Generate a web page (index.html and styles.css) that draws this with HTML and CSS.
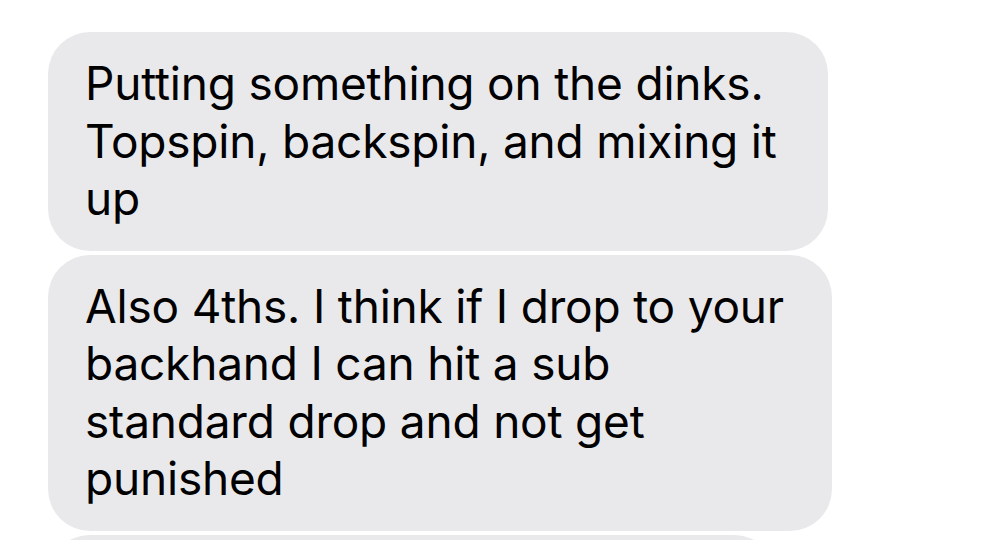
FILE: index.html
```html
<!DOCTYPE html>
<html>
	<head>
		<meta charset="UTF-8">
		<title>Messages</title>
		<link rel="stylesheet" href="styles.css">
	</head>

	<body>
		<div class="thread">
			<div class="bubble first">
				Putting something on the dinks.<br>
				Topspin, backspin, and mixing it<br>
				up
			</div>
			<div class="bubble second">
				Also 4ths. I think if I drop to your<br>
				backhand I can hit a sub<br>
				standard drop and not get<br>
				punished
			</div>
			<div class="bubble third">
				&nbsp;
			</div>
		</div>
	</body>
</html>
```

FILE: styles.css
```css
body {
	margin: 0;
	background: #ffffff;
}

.thread {
	box-sizing: border-box;
	height: 540px;
	overflow: hidden;
	display: flex;
	flex-direction: column;
	align-items: flex-start;
	gap: 4px;
	padding: 32px 0 0 48px;
}

.bubble {
	flex-shrink: 0;
	box-sizing: border-box;
	padding: 23px 20px 23px 37px;
	border-radius: 42px;
	background: #e9e9eb;
	color: #000000;
	font-family: Inter, "Liberation Sans", sans-serif;
	font-size: 46px;
	letter-spacing: -0.2px;
	line-height: 57.5px;
	white-space: nowrap;
}

.first {
	width: 780px;
}

.second {
	width: 784px;
}

.third {
	width: 728px;
}
```
